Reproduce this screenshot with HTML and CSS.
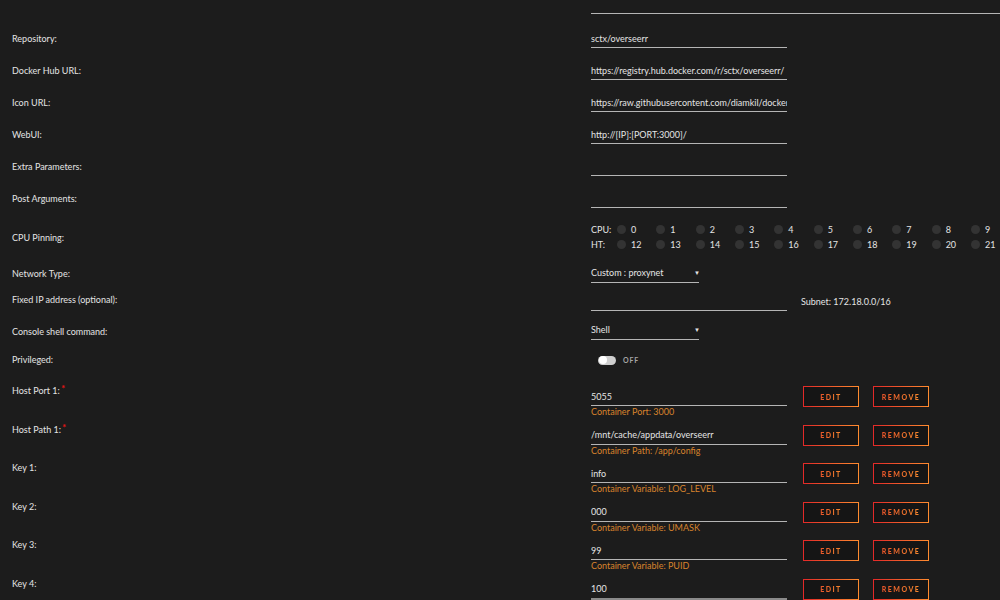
FILE: index.html
```html
<!DOCTYPE html>
<html>
<head>
<meta charset="utf-8">
<link rel="stylesheet" href="styles.css">
</head>
<body>
<div class="page">
  <div class="top-field"></div>

  <div class="row text-row">
    <div class="label">Repository:</div>
    <div class="value"><input class="field" type="text" value="sctx/overseerr"></div>
  </div>
  <div class="row text-row">
    <div class="label">Docker Hub URL:</div>
    <div class="value"><input class="field" type="text" value="https://registry.hub.docker.com/r/sctx/overseerr/"></div>
  </div>
  <div class="row text-row">
    <div class="label">Icon URL:</div>
    <div class="value"><input class="field" type="text" value="https://raw.githubusercontent.com/diamkil/docker-icons/master/overseerr.png"></div>
  </div>
  <div class="row text-row">
    <div class="label">WebUI:</div>
    <div class="value"><input class="field" type="text" value="http://[IP]:[PORT:3000]/"></div>
  </div>
  <div class="row text-row">
    <div class="label">Extra Parameters:</div>
    <div class="value"><input class="field" type="text" value=""></div>
  </div>
  <div class="row text-row">
    <div class="label">Post Arguments:</div>
    <div class="value"><input class="field" type="text" value=""></div>
  </div>

  <div class="row cpu-row">
    <div class="label">CPU Pinning:</div>
    <div class="value">
      <div class="cpu-grid">
        <span class="cpu-name">CPU:</span>
        <span class="cpu"><i></i>0</span><span class="cpu"><i></i>1</span><span class="cpu"><i></i>2</span><span class="cpu"><i></i>3</span><span class="cpu"><i></i>4</span><span class="cpu"><i></i>5</span><span class="cpu"><i></i>6</span><span class="cpu"><i></i>7</span><span class="cpu"><i></i>8</span><span class="cpu"><i></i>9</span>
        <span class="cpu-name">HT:</span>
        <span class="cpu"><i></i>12</span><span class="cpu"><i></i>13</span><span class="cpu"><i></i>14</span><span class="cpu"><i></i>15</span><span class="cpu"><i></i>16</span><span class="cpu"><i></i>17</span><span class="cpu"><i></i>18</span><span class="cpu"><i></i>19</span><span class="cpu"><i></i>20</span><span class="cpu"><i></i>21</span>
      </div>
    </div>
  </div>

  <div class="row net-row">
    <div class="label">Network Type:</div>
    <div class="value"><div class="select">Custom : proxynet<span class="arrow">▼</span></div></div>
  </div>
  <div class="row ip-row">
    <div class="label">Fixed IP address (optional):</div>
    <div class="value ip-value"><input class="field" type="text" value=""><span class="subnet">Subnet: 172.18.0.0/16</span></div>
  </div>
  <div class="row shell-row">
    <div class="label">Console shell command:</div>
    <div class="value"><div class="select">Shell<span class="arrow">▼</span></div></div>
  </div>
  <div class="row priv-row">
    <div class="label">Privileged:</div>
    <div class="value priv-value"><span class="toggle"><span class="knob"></span></span><span class="toggle-text">OFF</span></div>
  </div>

  <div class="ports">
    <div class="row port-row">
      <div class="label">Host Port 1: <span class="req">*</span></div>
      <div class="value port-value">
        <div class="port-field"><input class="field" type="text" value="5055"><div class="hint">Container Port: 3000</div></div>
        <button class="btn"><span>EDIT</span></button>
        <button class="btn"><span>REMOVE</span></button>
      </div>
    </div>
    <div class="row port-row">
      <div class="label">Host Path 1: <span class="req">*</span></div>
      <div class="value port-value">
        <div class="port-field"><input class="field" type="text" value="/mnt/cache/appdata/overseerr"><div class="hint">Container Path: /app/config</div></div>
        <button class="btn"><span>EDIT</span></button>
        <button class="btn"><span>REMOVE</span></button>
      </div>
    </div>
    <div class="row port-row">
      <div class="label">Key 1:</div>
      <div class="value port-value">
        <div class="port-field"><input class="field" type="text" value="info"><div class="hint">Container Variable: LOG_LEVEL</div></div>
        <button class="btn"><span>EDIT</span></button>
        <button class="btn"><span>REMOVE</span></button>
      </div>
    </div>
    <div class="row port-row">
      <div class="label">Key 2:</div>
      <div class="value port-value">
        <div class="port-field"><input class="field" type="text" value="000"><div class="hint">Container Variable: UMASK</div></div>
        <button class="btn"><span>EDIT</span></button>
        <button class="btn"><span>REMOVE</span></button>
      </div>
    </div>
    <div class="row port-row">
      <div class="label">Key 3:</div>
      <div class="value port-value">
        <div class="port-field"><input class="field" type="text" value="99"><div class="hint">Container Variable: PUID</div></div>
        <button class="btn"><span>EDIT</span></button>
        <button class="btn"><span>REMOVE</span></button>
      </div>
    </div>
    <div class="row port-row">
      <div class="label">Key 4:</div>
      <div class="value port-value">
        <div class="port-field"><input class="field field-last" type="text" value="100"></div>
        <button class="btn"><span>EDIT</span></button>
        <button class="btn"><span>REMOVE</span></button>
      </div>
    </div>
  </div>
</div>
</body>
</html>
```

FILE: styles.css
```css
html, body {
  margin: 0;
  padding: 0;
  background: #1c1c1c;
  overflow: hidden;
}
body {
  width: 1000px;
  height: 600px;
  font-family: Lato, "Open Sans", sans-serif;
  font-size: 9px;
  color: #e4e4e4;
}
.page {
  display: flex;
  flex-direction: column;
}
.top-field {
  margin-left: 591px;
  height: 13px;
  border-bottom: 1px solid #b5b5b5;
  margin-bottom: 9px;
}
.row {
  display: grid;
  grid-template-columns: 579px 1fr;
  padding-left: 12px;
}
.label {
  align-self: center;
  line-height: 12px;
  white-space: nowrap;
}
.value {
  min-width: 0;
}
.field {
  display: block;
  box-sizing: content-box;
  width: 196px;
  height: 18px;
  padding: 0;
  margin: 0;
  border: none;
  border-bottom: 1px solid #b5b5b5;
  background: transparent;
  color: #e4e4e4;
  font-family: Lato, "Open Sans", sans-serif;
  font-size: 9px;
  outline: none;
}
.text-row {
  height: 32px;
}
.text-row .value {
  padding-top: 6px;
}
.cpu-row {
  height: 46px;
}
.cpu-row .value {
  padding-top: 7px;
}
.cpu-grid {
  display: grid;
  grid-template-columns: 26px repeat(10, 39.33px);
  grid-auto-rows: 15px;
  align-items: center;
}
.cpu {
  display: flex;
  align-items: center;
  gap: 5px;
}
.cpu i {
  width: 9px;
  height: 9px;
  border-radius: 50%;
  background: #333;
}
.net-row {
  height: 26px;
}
.net-row .value {
  padding-top: 3px;
}
.select {
  width: 108px;
  height: 18px;
  line-height: 18px;
  border-bottom: 1px solid #b5b5b5;
  display: flex;
  justify-content: space-between;
  white-space: nowrap;
}
.arrow {
  font-size: 6px;
  color: #e4e4e4;
  margin-right: -1px;
}
.ip-row {
  height: 26px;
}
.ip-value {
  display: flex;
  align-items: center;
  gap: 14px;
  padding-top: 2px;
}
.shell-row {
  height: 37px;
}
.shell-row .value {
  padding-top: 8px;
}
.priv-row {
  height: 20px;
}
.priv-value {
  display: flex;
  align-items: center;
  gap: 7px;
  padding-left: 7px;
}
.toggle {
  width: 18px;
  height: 9px;
  border-radius: 5px;
  background: #cfcfcf;
  display: flex;
  align-items: center;
  padding-left: 1px;
  box-sizing: border-box;
}
.knob {
  width: 8px;
  height: 8px;
  border-radius: 50%;
  background: #fff;
}
.toggle-text {
  font-size: 7px;
  font-weight: 700;
  letter-spacing: 0.8px;
  color: #a5a5a5;
}
.ports {
  padding-top: 10px;
  display: flex;
  flex-direction: column;
}
.port-row {
  height: 38.6px;
}
.port-row .label {
  align-self: start;
  padding-top: 5px;
}
.req {
  color: #e01414;
  font-size: 9px;
  font-weight: 900;
  position: relative;
  top: -2px;
  margin-left: -1px;
}
.port-value {
  display: flex;
  align-items: flex-start;
  gap: 14px;
}
.port-field {
  padding-top: 7px;
  margin-right: 2px;
}
.hint {
  color: #d8832c;
  line-height: 12px;
  white-space: nowrap;
}
.field-last {
  border-bottom: 2px solid #8a8a8a;
}
.btn {
  margin-top: 6px;
  width: 56px;
  height: 21px;
  padding: 0;
  background: #151515;
  border: 1.5px solid #e22828;
  border-image: linear-gradient(90deg, #e22828, #ff8c2f) 1;
  font-family: Lato, "Open Sans", sans-serif;
  font-weight: 900;
  font-size: 7px;
  letter-spacing: 1.5px;
  cursor: pointer;
}
.btn span {
  background: linear-gradient(90deg, #e8552a, #f5872e);
  -webkit-background-clip: text;
  background-clip: text;
  color: transparent;
}
```
